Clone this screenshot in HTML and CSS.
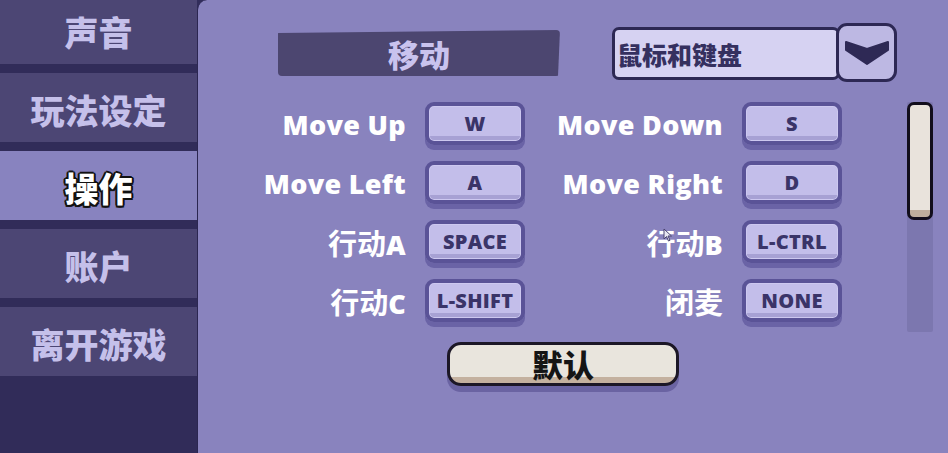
FILE: index.html
```html
<!DOCTYPE html>
<html lang="zh-CN">
<head>
    <meta charset="UTF-8">
    <title>设置 - 操作</title>
    <link rel="stylesheet" href="styles.css">
</head>
<body>
    <div class="screen">
        <nav class="sidebar">
            <div class="tab">声音</div>
            <div class="tab">玩法设定</div>
            <div class="tab active">操作</div>
            <div class="tab">账户</div>
            <div class="tab">离开游戏</div>
        </nav>

        <main class="panel">
            <div class="panel-head">
                <div class="section-title">移动</div>
                <div class="device-select">
                    <div class="select-box">鼠标和键盘</div>
                    <div class="select-btn">
                        <svg width="46" height="26" viewBox="0 0 46 26">
                            <polygon points="2,2 23,9 44,2 44,10 23,24 2,10" fill="#2e2955" stroke="#2e2955" stroke-width="2" stroke-linejoin="round"/>
                        </svg>
                    </div>
                </div>
            </div>

            <div class="panel-body">
                <div class="bindings">
                    <div class="bind-label">Move Up</div>
                    <div class="key">W</div>
                    <div class="bind-label">Move Down</div>
                    <div class="key">S</div>

                    <div class="bind-label">Move Left</div>
                    <div class="key">A</div>
                    <div class="bind-label">Move Right</div>
                    <div class="key">D</div>

                    <div class="bind-label"><span class="cjk">行动</span>A</div>
                    <div class="key">SPACE</div>
                    <div class="bind-label"><span class="cjk">行动</span>B</div>
                    <div class="key">L-CTRL</div>

                    <div class="bind-label"><span class="cjk">行动</span>C</div>
                    <div class="key">L-SHIFT</div>
                    <div class="bind-label"><span class="cjk">闭麦</span></div>
                    <div class="key">NONE</div>
                </div>
                <div class="scrollbar">
                    <div class="thumb"></div>
                </div>
            </div>

            <button class="btn-default">默认</button>
        </main>

        <!-- 鼠标指针 -->
        <svg class="cursor" width="10" height="14" viewBox="0 0 10 14">
            <path d="M1 1 L1 11 L3.5 8.5 L5.5 13 L7 12.3 L5 8 L8.5 8 Z" fill="#e8e6f2" stroke="#4a4470" stroke-width="1"/>
        </svg>
    </div>
</body>
</html>
```

FILE: styles.css
```css
* {
    margin: 0;
    padding: 0;
    box-sizing: border-box;
}

body {
    width: 948px;
    height: 453px;
    overflow: hidden;
    background-color: #322d5b;
    font-family: "Open Sans", "Noto Sans CJK SC", sans-serif;
}

.screen {
    display: flex;
    height: 453px;
    position: relative;
}

/* 左侧菜单 */
.sidebar {
    width: 197px;
    display: flex;
    flex-direction: column;
    gap: 9px;
    margin-top: -5px;
    background-color: #312c59;
}

.tab {
    height: 69px;
    padding-top: 4px;
    background-color: #4c4674;
    color: #c5c0ea;
    font-family: "Noto Sans CJK SC", sans-serif;
    font-size: 34px;
    font-weight: 900;
    display: flex;
    align-items: center;
    justify-content: center;
}

.tab.active {
    background-color: #8883bf;
    color: #ffffff;
    text-shadow:
        -2px 0 0 #111, 2px 0 0 #111, 0 -2px 0 #111, 0 2px 0 #111,
        -1.5px -1.5px 0 #111, 1.5px -1.5px 0 #111, -1.5px 1.5px 0 #111, 1.5px 1.5px 0 #111;
}

/* 右侧面板 */
.panel {
    flex: 1;
    background-color: #8983be;
    border-left: 1px solid #2b2650;
    border-top-left-radius: 10px;
    padding: 23px 15px 0 58px;
    display: flex;
    flex-direction: column;
}

.panel-head {
    display: flex;
    align-items: flex-start;
    margin-left: 22px;
}

.section-title {
    width: 282px;
    height: 46px;
    margin-top: 7px;
    background-color: #4c4670;
    border-radius: 4px;
    clip-path: polygon(0 3px, 100% 0, calc(100% - 2px) 100%, 0 100%);
    color: #c9c3ee;
    font-family: "Noto Sans CJK SC", sans-serif;
    font-size: 31px;
    font-weight: 900;
    line-height: 48px;
    text-align: center;
}

.device-select {
    display: flex;
    margin-left: 52px;
}

.select-box {
    width: 228px;
    height: 53px;
    margin-top: 4px;
    background-color: #d6d2f2;
    border: 3px solid #2d2854;
    border-radius: 7px;
    padding-left: 2px;
    color: #35305f;
    font-family: "Noto Sans CJK SC", sans-serif;
    font-size: 25px;
    font-weight: 900;
    line-height: 48px;
}

.select-btn {
    width: 61px;
    height: 59px;
    margin-left: -4px;
    position: relative;
    z-index: 1;
    background-color: #bdb8e3;
    border: 3px solid #2d2854;
    border-radius: 11px;
    display: flex;
    align-items: center;
    justify-content: center;
}

.panel-body {
    display: flex;
    margin-top: 20px;
}

/* 按键绑定 */
.bindings {
    display: grid;
    grid-template-columns: 150px 100px 179px 100px;
    grid-auto-rows: 48px;
    column-gap: 19px;
    row-gap: 11px;
}

.bind-label {
    height: 43px;
    line-height: 45px;
    text-align: right;
    color: #ffffff;
    font-size: 27px;
    font-weight: 800;
    letter-spacing: 0.3px;
    white-space: nowrap;
}

.bind-label .cjk {
    font-family: "Noto Sans CJK SC", sans-serif;
    font-size: 29px;
    font-weight: 700;
    letter-spacing: 0;
}

.key {
    height: 43px;
    border: 4px solid #5a5397;
    border-radius: 9px;
    background: linear-gradient(#c3beea 0, #c3beea calc(100% - 5px), #a7a1d4 calc(100% - 5px));
    box-shadow: 0 5px 0 #6a63a6, inset 0 0 0 1px #cdc8f0;
    color: #3a3468;
    font-size: 20px;
    font-weight: 800;
    letter-spacing: 0.3px;
    line-height: 36px;
    text-align: center;
    white-space: nowrap;
}

.scrollbar {
    width: 26px;
    height: 230px;
    margin-left: 65px;
    background-color: #7c77af;
    border-radius: 2px;
}

.thumb {
    height: 118px;
    border: 3px solid #120e1c;
    border-radius: 7px;
    background: linear-gradient(#e9e3dc 0, #e9e3dc calc(100% - 7px), #bfae9c calc(100% - 7px));
}

.btn-default {
    width: 232px;
    height: 44px;
    margin-top: 10px;
    margin-left: 191px;
    border: 3px solid #1c1726;
    border-radius: 14px;
    background: linear-gradient(#e9e5dd 0, #e9e5dd calc(100% - 6px), #c4b19f calc(100% - 6px));
    box-shadow: 0 6px 0 #6a63a2;
    color: #151515;
    font-family: "Noto Sans CJK SC", sans-serif;
    font-size: 31px;
    font-weight: 900;
    line-height: 36px;
}

.cursor {
    position: absolute;
    left: 663px;
    top: 228px;
}
```
